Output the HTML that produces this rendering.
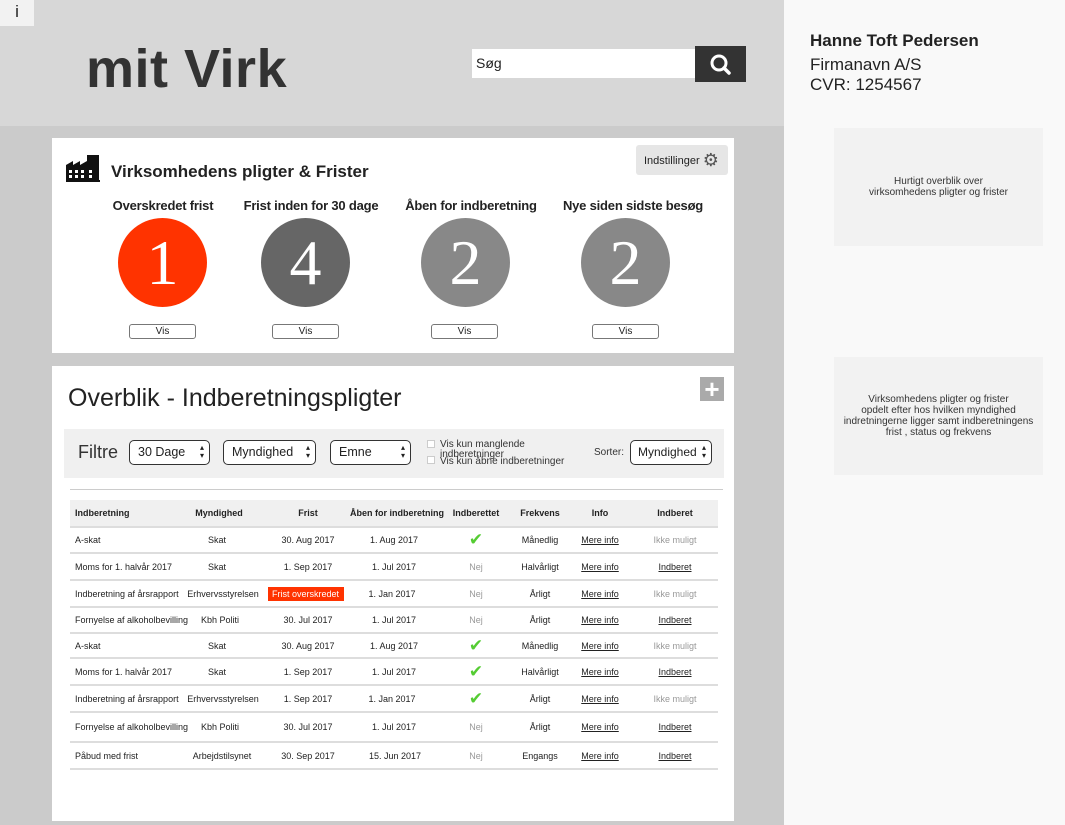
<!DOCTYPE html>
<html><head><meta charset="utf-8"><style>
*{margin:0;padding:0;box-sizing:border-box}
body{width:1065px;height:825px;position:relative;overflow:hidden;font-family:"Liberation Sans",Arial,sans-serif;background:#cbcbcb;color:#222}
.a{position:absolute}
.hdr{left:0;top:0;width:784px;height:126px;background:#d7d7d7}
.right{left:784px;top:0;width:281px;height:825px;background:#f9f9f9}
.box{background:#f2f2f2;font-size:10px;color:#333;text-align:center;display:flex;align-items:center;justify-content:center;line-height:11px}
.card{background:#fff}
.circ{width:89px;height:89px;border-radius:50%;color:#fff;font-family:"Liberation Serif",serif;font-size:64px;text-align:center;line-height:89px}
.lab{font-weight:bold;font-size:13px;text-align:center;width:170px;letter-spacing:-0.2px}
.vis{width:67px;height:15px;border:1px solid #777;border-radius:3px;font-size:10px;text-align:center;line-height:13px;background:#fff}
.sel{height:25px;border:1.5px solid #333;border-radius:5px;background:#fff;font-size:12.5px;padding-left:8px;line-height:22px}
.sel:after{content:"\25B4\A\25BE";white-space:pre;position:absolute;right:5px;top:3px;font-size:8px;line-height:8px}
.row{left:70px;width:648px;border-bottom:2px solid #ddd;font-size:9px}
.c{position:absolute;top:50%;transform:translate(-50%,-50%);white-space:nowrap}
.l{position:absolute;top:50%;transform:translateY(-50%);left:5px;white-space:nowrap}
.u{text-decoration:underline}
.g{color:#999}
.ck{color:#5c3;font-size:17px}
</style></head><body>
<div class="a hdr"></div>
<div class="a" style="left:0;top:0;width:34px;height:26px;background:#f2f2f2;font-size:17px;text-align:center;line-height:24px">i</div>
<div class="a" style="left:86px;top:38px;font-size:54px;font-weight:bold;color:#333;letter-spacing:0.5px">mit Virk</div>
<div class="a" style="left:472px;top:49px;width:223px;height:29px;background:#fff;font-size:14px;padding-left:4px;line-height:29px">Søg</div>
<div class="a" style="left:695px;top:46px;width:51px;height:36px;background:#333"><svg width="51" height="36"><circle cx="24" cy="17" r="7" fill="none" stroke="#fff" stroke-width="3"/><line x1="29" y1="22" x2="34" y2="27" stroke="#fff" stroke-width="3.5" stroke-linecap="round"/></svg></div>
<div class="a right"></div>
<div class="a" style="left:810px;top:31px;font-size:17px;font-weight:bold;color:#222">Hanne Toft Pedersen</div>
<div class="a" style="left:810px;top:55px;font-size:17px;line-height:20px;color:#222">Firmanavn A/S<br>CVR: 1254567</div>
<div class="a box" style="left:834px;top:128px;width:209px;height:118px">Hurtigt overblik over<br>virksomhedens pligter og frister</div>
<div class="a box" style="left:834px;top:357px;width:209px;height:118px">Virksomhedens pligter og frister<br>opdelt efter hos hvilken myndighed<br>indretningerne ligger samt indberetningens<br>frist , status og frekvens</div>

<div class="a card" style="left:52px;top:138px;width:682px;height:215px"></div>
<svg class="a" style="left:66px;top:155px" width="34" height="27"><path d="M0 27V10l7-4v4l7-4v4l7-4V0h4v0h3v0h0V0h5v27z" fill="#111"/><g fill="#fff"><rect x="3" y="15" width="3" height="3"/><rect x="9" y="15" width="3" height="3"/><rect x="15" y="15" width="3" height="3"/><rect x="3" y="20" width="3" height="3"/><rect x="9" y="20" width="3" height="3"/><rect x="15" y="20" width="3" height="3"/><rect x="23" y="15" width="3" height="3"/><rect x="23" y="20" width="3" height="3"/></g><rect x="0" y="25" width="34" height="2" fill="#111"/></svg>
<div class="a" style="left:111px;top:162px;font-size:17px;font-weight:bold;color:#222">Virksomhedens pligter &amp; Frister</div>
<div class="a" style="left:636px;top:145px;width:92px;height:30px;background:#e6e6e6;border-radius:3px;font-size:11px;line-height:30px;padding-left:8px">Indstillinger <span style="font-size:18px;color:#555;vertical-align:-2px">⚙</span></div>
<div class="a lab" style="left:78px;top:198px">Overskredet frist</div>
<div class="a lab" style="left:226px;top:198px">Frist inden for 30 dage</div>
<div class="a lab" style="left:386px;top:198px">Åben for indberetning</div>
<div class="a lab" style="left:548px;top:198px">Nye siden sidste besøg</div>
<div class="a circ" style="left:118px;top:218px;background:#ff3300">1</div>
<div class="a circ" style="left:261px;top:218px;background:#666">4</div>
<div class="a circ" style="left:421px;top:218px;background:#888">2</div>
<div class="a circ" style="left:581px;top:218px;background:#888">2</div>
<div class="a vis" style="left:129px;top:324px">Vis</div>
<div class="a vis" style="left:272px;top:324px">Vis</div>
<div class="a vis" style="left:431px;top:324px">Vis</div>
<div class="a vis" style="left:592px;top:324px">Vis</div>

<div class="a card" style="left:52px;top:366px;width:682px;height:455px"></div>
<div class="a" style="left:68px;top:384px;font-size:25px;color:#222">Overblik - Indberetningspligter</div>
<div class="a" style="left:700px;top:377px;width:24px;height:24px;background:#aaa;color:#fff;font-size:26px;font-weight:bold;text-align:center;line-height:24px">+</div>
<div class="a" style="left:64px;top:429px;width:660px;height:49px;background:#f0f0f0"></div>
<div class="a" style="left:78px;top:442px;font-size:18px;color:#333">Filtre</div>
<div class="a sel" style="left:129px;top:440px;width:81px">30 Dage</div>
<div class="a sel" style="left:223px;top:440px;width:93px">Myndighed</div>
<div class="a sel" style="left:330px;top:440px;width:81px">Emne</div>
<div class="a" style="left:427px;top:440px;width:8px;height:8px;border:1px solid #ccc;background:#fff"></div>
<div class="a" style="left:427px;top:456px;width:8px;height:8px;border:1px solid #ccc;background:#fff"></div>
<div class="a" style="left:440px;top:440px;font-size:10px;line-height:10px;color:#333">Vis kun manglende<br>indberetninger</div>
<div class="a" style="left:440px;top:456px;font-size:10px;color:#333">Vis kun åbne indberetninger</div>
<div class="a" style="left:594px;top:447px;font-size:10px;color:#333">Sorter:</div>
<div class="a sel" style="left:630px;top:440px;width:82px;padding-left:7px;font-size:12px">Myndighed</div>
<div class="a" style="left:70px;top:489px;width:653px;height:1px;background:#ccc"></div>

<div class="a row" style="top:500px;height:28px;background:#f0f0f0;font-weight:bold;font-size:9px"><span class="l">Indberetning</span><span class="c" style="left:149px">Myndighed</span><span class="c" style="left:238px">Frist</span><span class="c" style="left:327px">Åben for indberetning</span><span class="c" style="left:406px">Indberettet</span><span class="c" style="left:470px">Frekvens</span><span class="c" style="left:530px">Info</span><span class="c" style="left:605px">Indberet</span></div>

<div class="a row" style="top:528px;height:26px"><span class="l">A-skat</span><span class="c" style="left:147px">Skat</span><span class="c" style="left:238px">30. Aug 2017</span><span class="c" style="left:324px">1. Aug 2017</span><span class="c ck" style="left:406px">✔</span><span class="c" style="left:470px">Månedlig</span><span class="c u" style="left:530px">Mere info</span><span class="c g" style="left:605px">Ikke muligt</span></div>
<div class="a row" style="top:554px;height:27px"><span class="l">Moms for 1. halvår 2017</span><span class="c" style="left:147px">Skat</span><span class="c" style="left:238px">1. Sep 2017</span><span class="c" style="left:324px">1. Jul 2017</span><span class="c g" style="left:406px">Nej</span><span class="c" style="left:470px">Halvårligt</span><span class="c u" style="left:530px">Mere info</span><span class="c u" style="left:605px">Indberet</span></div>
<div class="a row" style="top:581px;height:27px"><span class="l">Indberetning af årsrapport</span><span class="c" style="left:153px">Erhvervsstyrelsen</span><span class="c" style="left:236px;background:#ff3300;color:#fff;padding:2px 4px;width:76px">Frist overskredet</span><span class="c" style="left:322px">1. Jan 2017</span><span class="c g" style="left:406px">Nej</span><span class="c" style="left:470px">Årligt</span><span class="c u" style="left:530px">Mere info</span><span class="c g" style="left:605px">Ikke muligt</span></div>
<div class="a row" style="top:608px;height:26px"><span class="l">Fornyelse af alkoholbevilling</span><span class="c" style="left:150px">Kbh Politi</span><span class="c" style="left:238px">30. Jul 2017</span><span class="c" style="left:324px">1. Jul 2017</span><span class="c g" style="left:406px">Nej</span><span class="c" style="left:470px">Årligt</span><span class="c u" style="left:530px">Mere info</span><span class="c u" style="left:605px">Indberet</span></div>
<div class="a row" style="top:634px;height:25px"><span class="l">A-skat</span><span class="c" style="left:147px">Skat</span><span class="c" style="left:238px">30. Aug 2017</span><span class="c" style="left:324px">1. Aug 2017</span><span class="c ck" style="left:406px">✔</span><span class="c" style="left:470px">Månedlig</span><span class="c u" style="left:530px">Mere info</span><span class="c g" style="left:605px">Ikke muligt</span></div>
<div class="a row" style="top:659px;height:27px"><span class="l">Moms for 1. halvår 2017</span><span class="c" style="left:147px">Skat</span><span class="c" style="left:238px">1. Sep 2017</span><span class="c" style="left:324px">1. Jul 2017</span><span class="c ck" style="left:406px">✔</span><span class="c" style="left:470px">Halvårligt</span><span class="c u" style="left:530px">Mere info</span><span class="c u" style="left:605px">Indberet</span></div>
<div class="a row" style="top:686px;height:27px"><span class="l">Indberetning af årsrapport</span><span class="c" style="left:153px">Erhvervsstyrelsen</span><span class="c" style="left:238px">1. Sep 2017</span><span class="c" style="left:322px">1. Jan 2017</span><span class="c ck" style="left:406px">✔</span><span class="c" style="left:470px">Årligt</span><span class="c u" style="left:530px">Mere info</span><span class="c g" style="left:605px">Ikke muligt</span></div>
<div class="a row" style="top:713px;height:30px"><span class="l">Fornyelse af alkoholbevilling</span><span class="c" style="left:150px">Kbh Politi</span><span class="c" style="left:238px">30. Jul 2017</span><span class="c" style="left:324px">1. Jul 2017</span><span class="c g" style="left:406px">Nej</span><span class="c" style="left:470px">Årligt</span><span class="c u" style="left:530px">Mere info</span><span class="c u" style="left:605px">Indberet</span></div>
<div class="a row" style="top:743px;height:27px"><span class="l">Påbud med frist</span><span class="c" style="left:152px">Arbejdstilsynet</span><span class="c" style="left:238px">30. Sep 2017</span><span class="c" style="left:325px">15. Jun 2017</span><span class="c g" style="left:406px">Nej</span><span class="c" style="left:470px">Engangs</span><span class="c u" style="left:530px">Mere info</span><span class="c u" style="left:605px">Indberet</span></div>
</body></html>
